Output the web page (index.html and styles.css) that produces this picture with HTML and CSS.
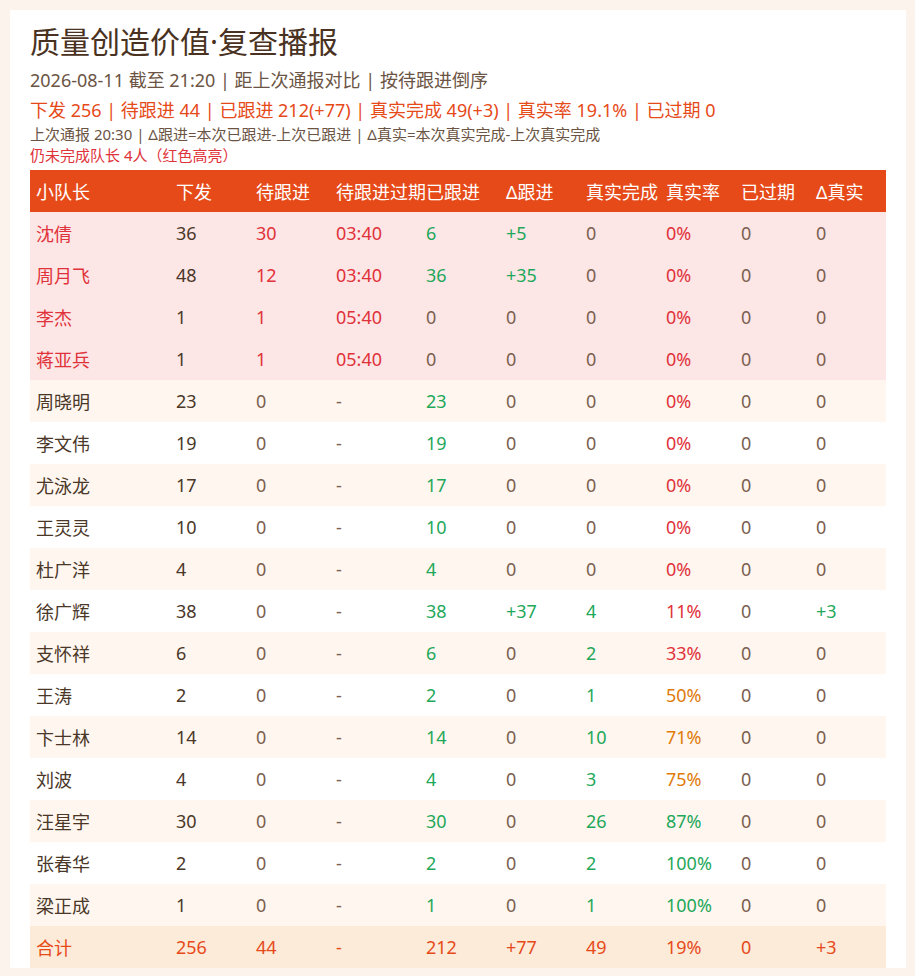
FILE: index.html
```html
<!DOCTYPE html>
<html lang="zh-CN">
<head>
<meta charset="utf-8">
<title>质量创造价值·复查播报</title>
<link rel="stylesheet" href="styles.css">
</head>
<body>
<div class="card">
  <h1 class="title">质量创造价值·复查播报</h1>
  <div class="sub">2026-08-11 截至 21:20 | 距上次通报对比 | 按待跟进倒序</div>
  <div class="summary">下发 256 | 待跟进 44 | 已跟进 212(+77) | 真实完成 49(+3) | 真实率 19.1% | 已过期 0</div>
  <div class="note">上次通报 20:30 | Δ跟进=本次已跟进-上次已跟进 | Δ真实=本次真实完成-上次真实完成</div>
  <div class="alert">仍未完成队长 4人（红色高亮）</div>
  <table class="grid">
    <colgroup>
      <col class="c-name"><col class="c-80"><col class="c-80"><col class="c-90"><col class="c-80"><col class="c-80"><col class="c-80"><col class="c-75"><col class="c-75"><col class="c-76">
    </colgroup>
    <thead>
      <tr><th>小队长</th><th>下发</th><th>待跟进</th><th>待跟进过期</th><th>已跟进</th><th>Δ跟进</th><th>真实完成</th><th>真实率</th><th>已过期</th><th>Δ真实</th></tr>
    </thead>
    <tbody>
      <tr class="hl"><td class="red">沈倩</td><td>36</td><td class="red">30</td><td class="red">03:40</td><td class="green">6</td><td class="green">+5</td><td class="mute">0</td><td class="red">0%</td><td class="mute">0</td><td class="mute">0</td></tr>
      <tr class="hl"><td class="red">周月飞</td><td>48</td><td class="red">12</td><td class="red">03:40</td><td class="green">36</td><td class="green">+35</td><td class="mute">0</td><td class="red">0%</td><td class="mute">0</td><td class="mute">0</td></tr>
      <tr class="hl"><td class="red">李杰</td><td>1</td><td class="red">1</td><td class="red">05:40</td><td class="mute">0</td><td class="mute">0</td><td class="mute">0</td><td class="red">0%</td><td class="mute">0</td><td class="mute">0</td></tr>
      <tr class="hl"><td class="red">蒋亚兵</td><td>1</td><td class="red">1</td><td class="red">05:40</td><td class="mute">0</td><td class="mute">0</td><td class="mute">0</td><td class="red">0%</td><td class="mute">0</td><td class="mute">0</td></tr>
      <tr><td>周晓明</td><td>23</td><td class="mute">0</td><td class="mute">-</td><td class="green">23</td><td class="mute">0</td><td class="mute">0</td><td class="red">0%</td><td class="mute">0</td><td class="mute">0</td></tr>
      <tr><td>李文伟</td><td>19</td><td class="mute">0</td><td class="mute">-</td><td class="green">19</td><td class="mute">0</td><td class="mute">0</td><td class="red">0%</td><td class="mute">0</td><td class="mute">0</td></tr>
      <tr><td>尤泳龙</td><td>17</td><td class="mute">0</td><td class="mute">-</td><td class="green">17</td><td class="mute">0</td><td class="mute">0</td><td class="red">0%</td><td class="mute">0</td><td class="mute">0</td></tr>
      <tr><td>王灵灵</td><td>10</td><td class="mute">0</td><td class="mute">-</td><td class="green">10</td><td class="mute">0</td><td class="mute">0</td><td class="red">0%</td><td class="mute">0</td><td class="mute">0</td></tr>
      <tr><td>杜广洋</td><td>4</td><td class="mute">0</td><td class="mute">-</td><td class="green">4</td><td class="mute">0</td><td class="mute">0</td><td class="red">0%</td><td class="mute">0</td><td class="mute">0</td></tr>
      <tr><td>徐广辉</td><td>38</td><td class="mute">0</td><td class="mute">-</td><td class="green">38</td><td class="green">+37</td><td class="green">4</td><td class="red">11%</td><td class="mute">0</td><td class="green">+3</td></tr>
      <tr><td>支怀祥</td><td>6</td><td class="mute">0</td><td class="mute">-</td><td class="green">6</td><td class="mute">0</td><td class="green">2</td><td class="red">33%</td><td class="mute">0</td><td class="mute">0</td></tr>
      <tr><td>王涛</td><td>2</td><td class="mute">0</td><td class="mute">-</td><td class="green">2</td><td class="mute">0</td><td class="green">1</td><td class="orange">50%</td><td class="mute">0</td><td class="mute">0</td></tr>
      <tr><td>卞士林</td><td>14</td><td class="mute">0</td><td class="mute">-</td><td class="green">14</td><td class="mute">0</td><td class="green">10</td><td class="orange">71%</td><td class="mute">0</td><td class="mute">0</td></tr>
      <tr><td>刘波</td><td>4</td><td class="mute">0</td><td class="mute">-</td><td class="green">4</td><td class="mute">0</td><td class="green">3</td><td class="orange">75%</td><td class="mute">0</td><td class="mute">0</td></tr>
      <tr><td>汪星宇</td><td>30</td><td class="mute">0</td><td class="mute">-</td><td class="green">30</td><td class="mute">0</td><td class="green">26</td><td class="green">87%</td><td class="mute">0</td><td class="mute">0</td></tr>
      <tr><td>张春华</td><td>2</td><td class="mute">0</td><td class="mute">-</td><td class="green">2</td><td class="mute">0</td><td class="green">2</td><td class="green">100%</td><td class="mute">0</td><td class="mute">0</td></tr>
      <tr><td>梁正成</td><td>1</td><td class="mute">0</td><td class="mute">-</td><td class="green">1</td><td class="mute">0</td><td class="green">1</td><td class="green">100%</td><td class="mute">0</td><td class="mute">0</td></tr>
      <tr class="total"><td>合计</td><td>256</td><td>44</td><td>-</td><td>212</td><td>+77</td><td>49</td><td>19%</td><td>0</td><td>+3</td></tr>
    </tbody>
  </table>
</div>
</body>
</html>
```
FILE: styles.css
```css
html, body {
  background: #fbf3ec;
}
body {
  margin: 10px 9px 0 10px;
  font-family: "Noto Sans", "Noto Sans CJK SC", sans-serif;
  color: #4a3728;
}
.card {
  background: #ffffff;
  padding: 14px 20px 0 20px;
}
.title {
  margin: 0;
  font-size: 30px;
  line-height: 36px;
  font-weight: normal;
  color: #4a3222;
}
.sub {
  margin-top: 8px;
  font-size: 18px;
  line-height: 24px;
  color: #6b5443;
}
.summary {
  margin-top: 6px;
  font-size: 18px;
  line-height: 24px;
  color: #e64a19;
}
.note {
  margin-top: 2px;
  font-size: 15px;
  line-height: 21px;
  color: #6b5443;
}
.alert {
  font-size: 15px;
  line-height: 21px;
  color: #e0323a;
}
.grid {
  margin-top: 4px;
  width: 856px;
  table-layout: fixed;
  border-collapse: collapse;
  font-size: 18px;
}
.c-name { width: 140px; }
.c-80 { width: 80px; }
.c-90 { width: 90px; }
.c-75 { width: 75px; }
.c-76 { width: 76px; }
.grid th, .grid td {
  height: 42px;
  padding: 0 0 0 6px;
  text-align: left;
  white-space: nowrap;
  vertical-align: middle;
  box-sizing: border-box;
}
.grid th {
  background: #e64a19;
  color: #ffffff;
  font-weight: normal;
}
.grid tbody tr:nth-child(odd) {
  background: #fef6ef;
}
.grid tbody tr.hl {
  background: #fde6e6;
}
.grid tbody tr.total {
  background: #fdebd9;
  color: #e64a19;
}
.red { color: #e0323a; }
.green { color: #1fa85a; }
.orange { color: #e07b0a; }
.mute { color: #7a6050; }
```
